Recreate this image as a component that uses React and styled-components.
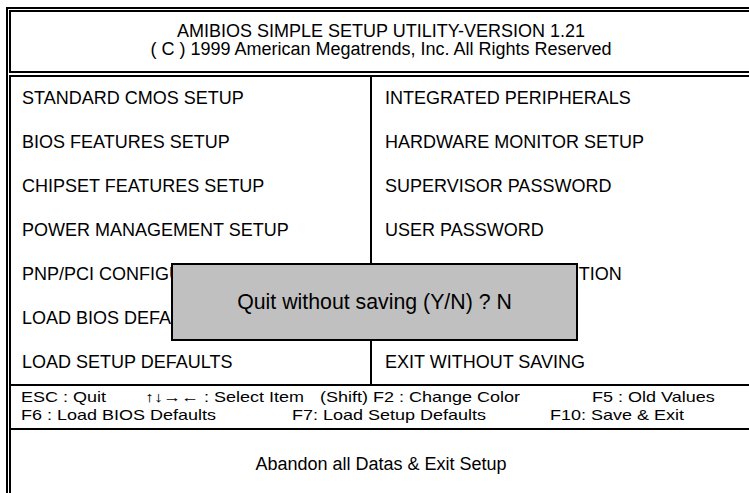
import React from 'react';
import styled, { createGlobalStyle } from 'styled-components';

const Global = createGlobalStyle`
  html, body { margin: 0; padding: 0; background: #fff; overflow: hidden; }
  body { font-family: "Liberation Sans", Arial, sans-serif; color: #000; }
`;

const Page = styled.div`
  position: relative;
  width: 749px;
  height: 493px;
  overflow: hidden;
  padding: 7px 0 0 6px;
  box-sizing: border-box;
`;

const Frame = styled.div`
  width: 750px;
  box-sizing: border-box;
  border: 2px solid #000;
  padding: 1px;
  display: flex;
  flex-direction: column;
  gap: 2px;
`;

const Header = styled.div`
  border: 2px solid #000;
  height: 63px;
  padding-top: 10px;
  box-sizing: border-box;
  font-size: 18px;
  line-height: 18px;
  text-align: center;
  white-space: nowrap;
`;

const HeaderLine = styled.div`
  height: 18px;
`;

const Body = styled.div`
  border: 2px solid #000;
  border-bottom: none;
  display: flex;
  flex-direction: column;
`;

const MenuGrid = styled.div`
  display: grid;
  grid-template-columns: 361px 1fr;
  grid-template-rows: repeat(7, 1fr);
  height: 307px;
  border-bottom: 2px solid #000;
`;

const MenuItem = styled.div`
  display: flex;
  align-items: center;
  font-size: 18px;
  white-space: nowrap;
  overflow: hidden;
  padding-left: ${p => (p.$right ? '13px' : '11px')};
  border-right: ${p => (p.$right ? 'none' : '2px solid #000')};
`;

const Keys = styled.div`
  height: 40px;
  padding: 2px 0 0 10px;
  border-bottom: 2px solid #000;
  font-size: 18px;
  line-height: 18px;
  white-space: nowrap;
`;

const KeyLine = styled.div`
  display: flex;
  height: 18px;
  transform: scaleY(0.8);
`;

const KeyItem = styled.span`
  flex: 0 0 ${p => p.$w}px;
`;

const Status = styled.div`
  height: 80px;
  padding-top: 25px;
  font-size: 18px;
  line-height: 18px;
  text-align: center;
  white-space: nowrap;
`;

const Dialog = styled.div`
  position: absolute;
  left: 171px;
  top: 263px;
  width: 407px;
  height: 78px;
  box-sizing: border-box;
  border: 2px solid #000;
  background: #c0c0c0;
  display: flex;
  align-items: center;
  justify-content: center;
  font-size: 21.3px;
  white-space: nowrap;
`;

const left = [
  'STANDARD CMOS SETUP',
  'BIOS FEATURES SETUP',
  'CHIPSET FEATURES SETUP',
  'POWER MANAGEMENT SETUP',
  'PNP/PCI CONFIGURATION',
  'LOAD BIOS DEFAULTS',
  'LOAD SETUP DEFAULTS',
];

const right = [
  'INTEGRATED PERIPHERALS',
  'HARDWARE MONITOR SETUP',
  'SUPERVISOR PASSWORD',
  'USER PASSWORD',
  'IDE HDD AUTO DETECTION',
  'SAVE & EXIT SETUP',
  'EXIT WITHOUT SAVING',
];

export default function App() {
  return (
    <>
      <Global />
      <Page>
        <Frame>
          <Header>
            <HeaderLine>AMIBIOS SIMPLE SETUP UTILITY-VERSION 1.21</HeaderLine>
            <HeaderLine>( C ) 1999 American Megatrends, Inc. All Rights Reserved</HeaderLine>
          </Header>
          <Body>
            <MenuGrid>
              {left.map((l, i) => (
                <React.Fragment key={i}>
                  <MenuItem>{l}</MenuItem>
                  <MenuItem $right>{right[i]}</MenuItem>
                </React.Fragment>
              ))}
            </MenuGrid>
            <Keys>
              <KeyLine>
                <KeyItem $w={124}>ESC : Quit</KeyItem>
                <KeyItem $w={175}>↑↓→← : Select Item</KeyItem>
                <KeyItem $w={272}>(Shift) F2 : Change Color</KeyItem>
                <KeyItem $w={160}>F5 : Old Values</KeyItem>
              </KeyLine>
              <KeyLine>
                <KeyItem $w={271}>F6 : Load BIOS Defaults</KeyItem>
                <KeyItem $w={258}>F7: Load Setup Defaults</KeyItem>
                <KeyItem $w={200}>F10: Save &amp; Exit</KeyItem>
              </KeyLine>
            </Keys>
            <Status>Abandon all Datas &amp; Exit Setup</Status>
          </Body>
        </Frame>
        <Dialog>Quit without saving (Y/N) ? N</Dialog>
      </Page>
    </>
  );
}
